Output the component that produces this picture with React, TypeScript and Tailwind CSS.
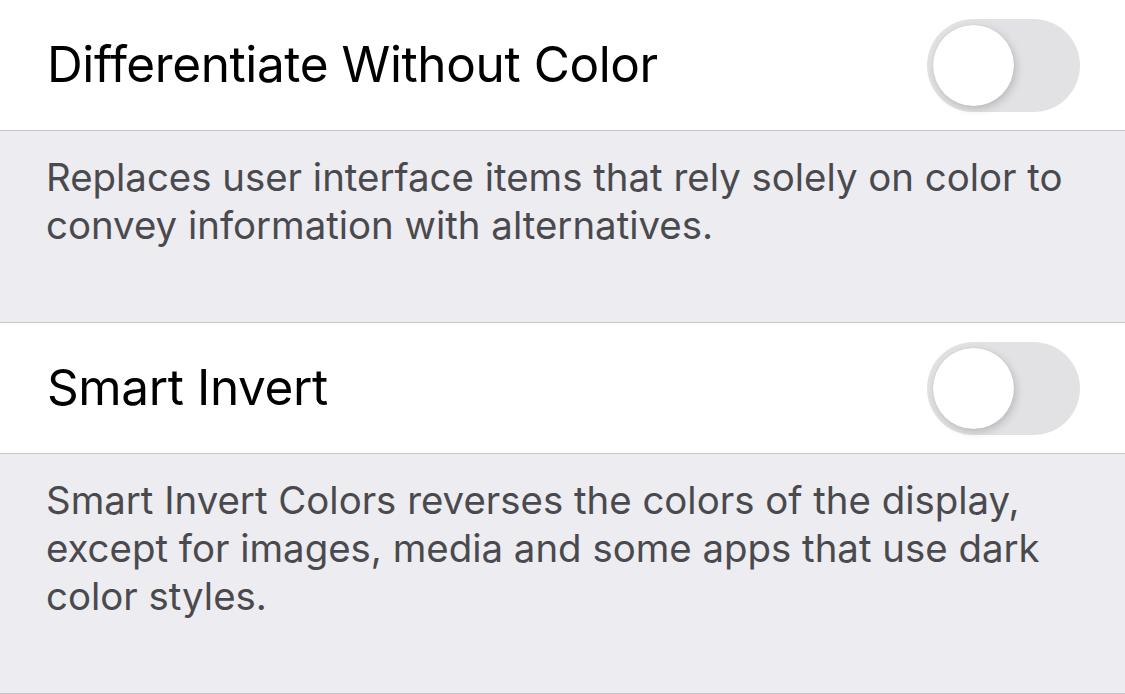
const font = { fontFamily: "Inter, 'Noto Sans', sans-serif" };

function Toggle() {
  return (
    <div className="flex h-[93px] w-[153px] shrink-0 items-center rounded-full bg-[#e2e2e5] px-[6px]">
      <div className="h-[81px] w-[81px] rounded-full bg-white shadow-[2px_3px_8px_rgba(0,0,0,0.18),0_0_1px_rgba(0,0,0,0.15)]" />
    </div>
  );
}

function Row({ title }: { title: string }) {
  return (
    <div className="flex h-[131px] items-center justify-between border-b border-[#c6c6ca] bg-white pl-[47px] pr-[45px]">
      <span className="text-[49.5px] leading-none tracking-[-0.4px] text-black">{title}</span>
      <Toggle />
    </div>
  );
}

function Footer({ lines, height }: { lines: string[]; height: string }) {
  return (
    <div className={`${height} border-b border-[#c6c6ca] bg-[#ececf1] pl-[46px] pt-[22px]`}>
      {lines.map((l) => (
        <div key={l} className="whitespace-nowrap text-[38.4px] leading-[48px] text-[#4a4a4e]">
          {l}
        </div>
      ))}
    </div>
  );
}

export default function App() {
  return (
    <div style={font} className="h-[694px] w-[1125px] overflow-hidden bg-[#ececf1]">
      <Row title="Differentiate Without Color" />
      <Footer
        height="h-[192px]"
        lines={[
          "Replaces user interface items that rely solely on color to",
          "convey information with alternatives.",
        ]}
      />
      <Row title="Smart Invert" />
      <Footer
        height="h-[240px]"
        lines={[
          "Smart Invert Colors reverses the colors of the display,",
          "except for images, media and some apps that use dark",
          "color styles.",
        ]}
      />
    </div>
  );
}
